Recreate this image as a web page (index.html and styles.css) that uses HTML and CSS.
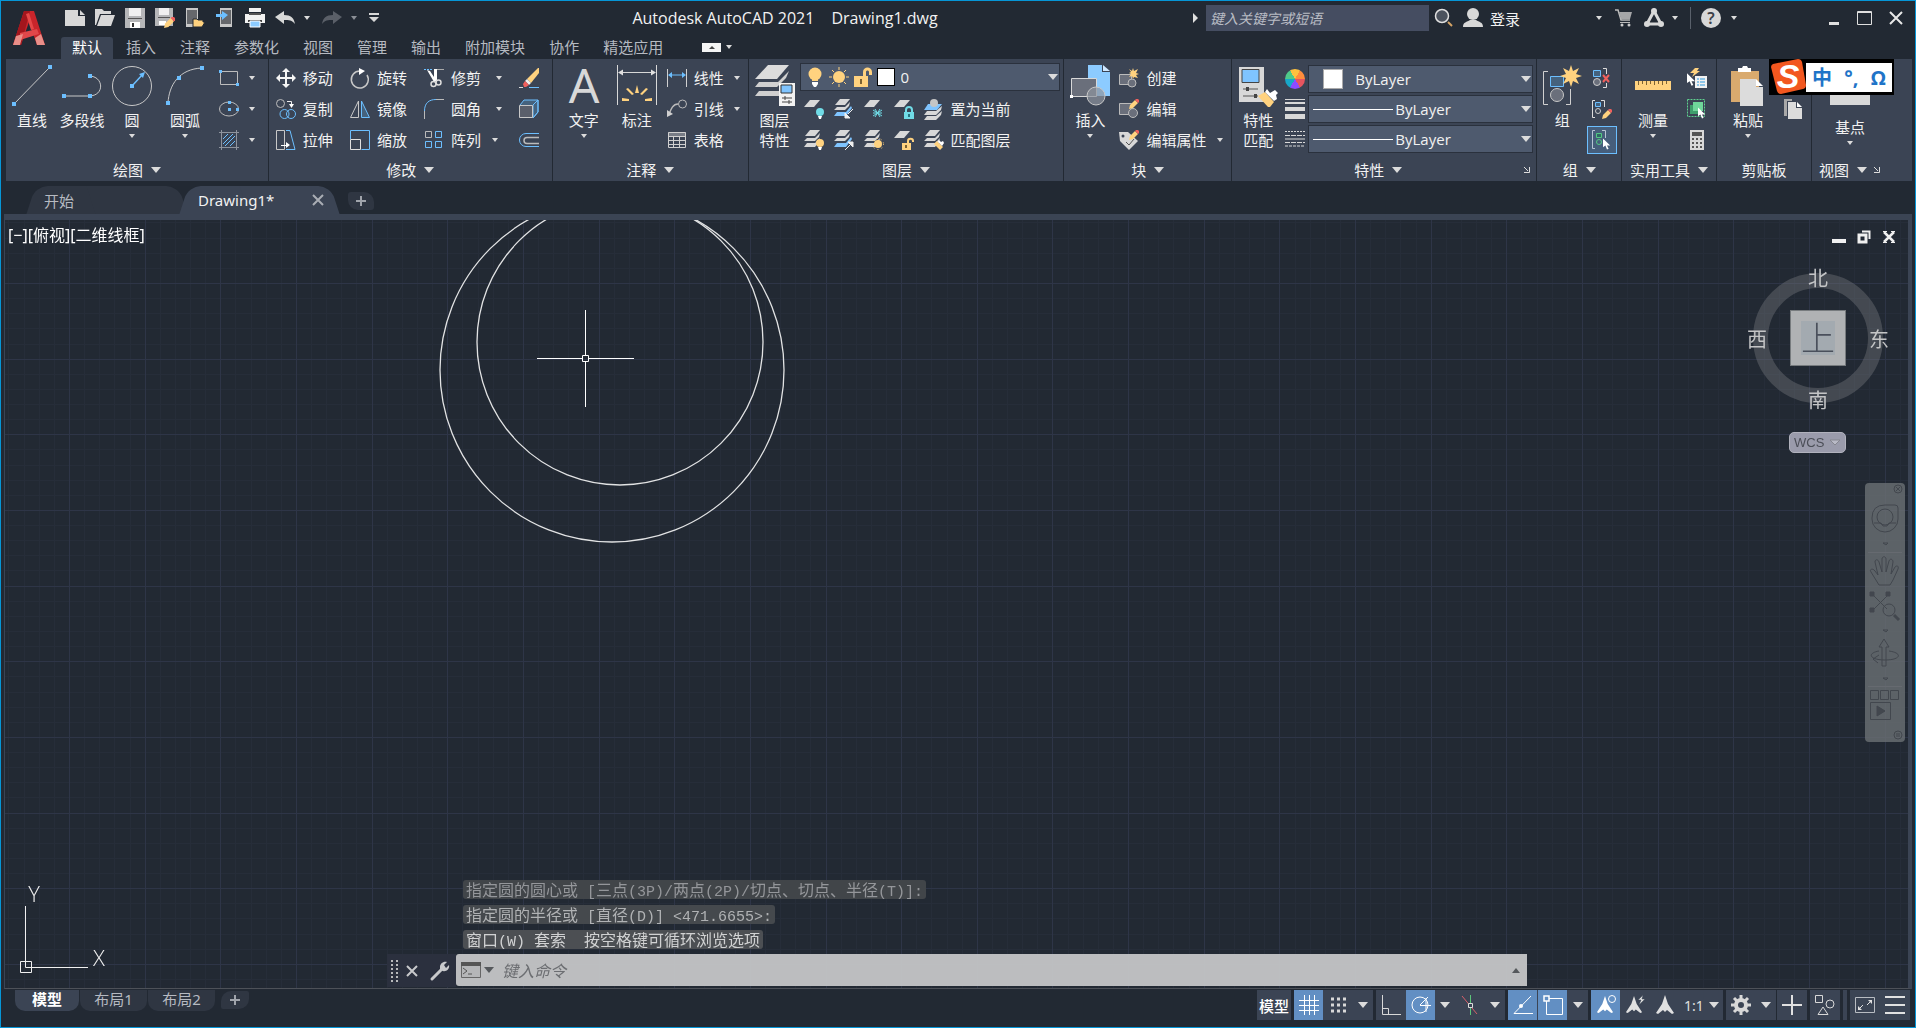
FILE: index.html
```html
<!DOCTYPE html>
<html lang="zh-CN">
<head>
  <meta charset="UTF-8" />
  <meta name="viewport" content="width=device-width, initial-scale=1.0"/>
  <title>Autodesk AutoCAD 2021 - Drawing1.dwg</title>
  <link rel="stylesheet" href="styles.css">
</head>
<body>

<!-- shared icon parts -->
<svg class="defs" aria-hidden="true">
  <symbol id="sheet" viewBox="0 0 20 20"><path d="M6 1h10l-6 7H0z" fill="#d8d8d8"/></symbol>
  <symbol id="stack" viewBox="0 0 20 20"><path d="M6 0h10l-5 6H1z" fill="#d8d8d8"/><path d="M3 8h8l5-5-1 4-4 4H0zM3 13h8l5-5-1 4-4 5H0z" fill="#d8d8d8"/></symbol>
  <symbol id="stack-blue" viewBox="0 0 20 20"><path d="M6 0h10l-5 6H1z" fill="#d8d8d8"/><path d="M3 8h8l5-5-1 4-4 4H0z" fill="#d8d8d8"/><path d="M3 13h9l5-6 1 2-6 8H0z" fill="#7fc4ff"/></symbol>
  <symbol id="pencil" viewBox="0 0 10 10"><path d="M0 10l1-4 5-5 3 3-5 5z" fill="#ffd27f"/><path d="M6 1l1-1h2l1 1v2L9 4z" fill="#f0605d"/></symbol>
  <symbol id="cursor" viewBox="0 0 10 14"><path d="M0 0v11l3-2 2 5 2-1-2-4h4z" fill="#fff"/></symbol>
  <symbol id="aperson" viewBox="0 0 20 20"><path d="M10 0l3 9 6 9-2 1-5-4-2 2-2-2-5 4-2-1 6-9z" fill="currentColor"/></symbol>
</svg>

<header class="app-header">
  <button class="app-menu" aria-label="应用程序菜单">
    <svg width="34" height="38" viewBox="0 0 34 38"><path d="M12 2h10l11 34h-8L17 13 9 36H1z" fill="#c9252b"/><path d="M12 2h6L9 36H1z" fill="#a3161d"/><path d="M8 24l17-4 2 5-19 6z" fill="#e0474a"/><path d="M1 36l3-9 7-2-3 11zM25 36l-2-7 6-4 4 11z" fill="#e98e88"/><path d="M14 5l3-1 5 16-3 1z" fill="#e54848"/></svg>
  </button>
  <div class="title-bar">
    <div class="quick-access">
      <button aria-label="新建"><svg class="i20" viewBox="0 0 20 20"><path d="M0 2h13v6h7v10H0z" fill="#d8d8d8"/><path d="M15 2l5 5h-5z" fill="#d8d8d8"/></svg></button>
      <button aria-label="打开"><svg class="i20" viewBox="0 0 20 20"><path d="M0 1h7l2 2h7v3H5L1 17H0z" fill="#d8d8d8"/><path d="M6 7h14l-4 11H2z" fill="#d8d8d8"/></svg></button>
      <button aria-label="保存"><svg class="i20" viewBox="0 0 20 20"><path d="M0 0h20v20H0z" fill="#b5b6b8"/><path d="M4 0h12v8H4z" fill="#f0f0f0"/><path d="M3 10h14v1H3z" fill="#555"/><path d="M5 14h10v6H5z" fill="#fff"/><path d="M7 15h2v4H7z" fill="#333"/></svg></button>
      <button aria-label="另存为"><svg class="i20" viewBox="0 0 20 20"><path d="M0 0h18v18H0z" fill="#b5b6b8"/><path d="M4 0h10v7H4z" fill="#f0f0f0"/><path d="M3 9h12v1H3z" fill="#555"/><path d="M4 13h7v4H4z" fill="#fff"/><use href="#pencil" x="9" y="9" width="11" height="11"/></svg></button>
      <button aria-label="从移动端打开"><svg class="i20" viewBox="0 0 20 20"><path d="M1 0h12v19H1z" fill="#c8c8c8"/><path d="M2 2h10v14H2z" fill="#66686c"/><path d="M8 11h4l1 1h5v2h2l-3 5H8z" fill="#ffd27f" stroke="#222933"/></svg></button>
      <button aria-label="保存到移动端"><svg class="i20" viewBox="0 0 20 20"><path d="M5 0h12v19H5z" fill="#c8c8c8"/><path d="M6 2h10v14H6z" fill="#66686c"/><path d="M1 6h6V3l6 4-6 5V9H1z" fill="#6cbfff"/></svg></button>
      <button aria-label="打印"><svg class="i20" viewBox="0 0 20 20"><path d="M4 0h12v4H4zM0 6h20v9H0z" fill="#f2f2f2"/><path d="M4 5h12v2H4z" fill="#555"/><path d="M3 12h14v2H3z" fill="#444"/><path d="M5 13h10v6H5z" fill="#8ccbff" stroke="#fff"/></svg></button>
      <button aria-label="放弃"><svg class="i20" viewBox="0 0 20 20"><path d="M0 9l9-6v4c7 0 10 3 11 9-3-4-6-4-11-4v4z" fill="#d8d8d8"/></svg></button>
      <button class="drop" aria-label="放弃列表"><i class="caret"></i></button>
      <button aria-label="重做"><svg class="i20" viewBox="0 0 20 20"><path d="M20 9l-9-6v4C4 7 1 10 0 16c3-4 6-4 11-4v4z" fill="#5a5f68"/></svg></button>
      <button class="drop" aria-label="重做列表"><i class="caret dim"></i></button>
      <button aria-label="自定义快速访问工具栏"><svg width="10" height="12" viewBox="0 0 10 12"><path d="M0 1h10v2H0zM0 5h10l-5 5z" fill="#d8d8d8"/></svg></button>
    </div>
    <h1 class="window-title"><span>Autodesk AutoCAD 2021</span><span>Drawing1.dwg</span></h1>
    <div class="info-center">
      <button aria-label="展开搜索"><svg width="8" height="12" viewBox="0 0 8 12"><path d="M2 1l5 5-5 5z" fill="#e0e0e0"/></svg></button>
      <input class="search-box" type="text" aria-label="搜索" placeholder="键入关键字或短语">
      <button aria-label="搜索"><svg class="i20" viewBox="0 0 20 20"><path d="M14 14l4 4" stroke="#d6a466" stroke-width="2"/><circle cx="8" cy="8" r="6.500" fill="#4c535e" stroke="#e0e0e0" stroke-width="1.500"/></svg></button>
      <button class="login"><svg class="i20" viewBox="0 0 20 20"><circle cx="10" cy="6" r="6" fill="#d8d8d8"/><path d="M0 19c0-5 4-5 7-7h6c3 2 7 2 7 7z" fill="#d8d8d8"/></svg><span>登录</span><i class="caret"></i></button>
      <button aria-label="应用商店"><svg class="i20" viewBox="0 0 20 20"><path d="M1 2h3l3 10h9" fill="none" stroke="#bbb" stroke-width="1.500"/><path d="M5 4h13l-2 7H7z" fill="#a5a6a8"/><path d="M6 14h10v1H6z" fill="#bbb"/><circle cx="8" cy="17" r="1.500" fill="#ccc"/><circle cx="15" cy="17" r="1.500" fill="#ccc"/></svg></button>
      <button class="with-caret" aria-label="保持连接"><svg class="i20" viewBox="0 0 20 20"><path d="M10 3l7 13H3z" fill="none" stroke="#d8d8d8" stroke-width="3"/><circle cx="10" cy="3" r="3" fill="#d8d8d8"/><circle cx="3" cy="16" r="3" fill="#d8d8d8"/><circle cx="17" cy="16" r="3" fill="#d8d8d8"/></svg><i class="caret"></i></button>
      <span class="divider"></span>
      <button class="with-caret help" aria-label="帮助"><span class="help-mark">?</span><i class="caret"></i></button>
    </div>
    <div class="window-buttons">
      <button aria-label="最小化"><svg width="16" height="16" viewBox="0 0 16 16"><path d="M3 12h10v3H3z" fill="#e0e0e0"/></svg></button>
      <button aria-label="最大化"><svg width="16" height="16" viewBox="0 0 16 16"><path d="M.5 1.500h14v13H.5zM0 2.500h15" fill="none" stroke="#e0e0e0"/></svg></button>
      <button aria-label="关闭"><svg width="16" height="16" viewBox="0 0 16 16"><path d="M2 2l12 12M14 2L2 14" stroke="#e8e8e8" stroke-width="2"/></svg></button>
    </div>
  </div>
  <nav class="ribbon-tabs">
    <button class="active">默认</button>
    <button>插入</button>
    <button>注释</button>
    <button>参数化</button>
    <button>视图</button>
    <button>管理</button>
    <button>输出</button>
    <button>附加模块</button>
    <button>协作</button>
    <button>精选应用</button>
    <button class="ribbon-toggle" aria-label="最小化功能区"><svg width="19" height="9" viewBox="0 0 19 9"><path d="M0 0h19v9H0z" fill="#f5f5f5"/><path d="M7 6h6L10 3z" fill="#444"/></svg><i class="caret"></i></button>
  </nav>
</header>

<section class="ribbon">
  <!-- 绘图 -->
  <div class="panel panel-draw">
    <div class="panel-body">
      <button class="big"><svg class="i40" viewBox="0 0 40 40"><path d="M2 39L38 2" stroke="#c8c8c8"/><path d="M0 37h4v4H0zM36 0h4v4h-4z" fill="#6cbfff"/></svg><span>直线</span></button>
      <button class="big"><svg class="i40" viewBox="0 0 40 40"><path d="M2 31h25c16 0 15-20 0-20" fill="none" stroke="#c8c8c8"/><path d="M0 29h4v4H0zM26 29h4v4h-4zM26 9h4v4h-4z" fill="#6cbfff"/></svg><span>多段线</span></button>
      <button class="big"><svg class="i40" viewBox="0 0 40 40"><circle cx="20" cy="21" r="19.500" fill="none" stroke="#c8c8c8"/><path d="M20 21l11-12" stroke="#6cbfff" stroke-width="1.500"/><path d="M18 19h4v4h-4zM33 7l-6 2 4 4z" fill="#6cbfff"/></svg><span>圆</span><i class="caret"></i></button>
      <button class="big wide"><svg class="i40" viewBox="0 0 40 40"><path d="M3 38C4 20 14 4 37 3" fill="none" stroke="#c8c8c8"/><path d="M1 36h4v4H1zM12 11h4v4h-4zM35 1h4v4h-4z" fill="#6cbfff"/></svg><span>圆弧</span><i class="caret"></i></button>
      <div class="rows">
        <button class="small" aria-label="矩形"><svg class="i20" viewBox="0 0 20 20"><path d="M1.500 3.500h17v13h-17z" fill="none" stroke="#bdbdbd"/><path d="M0 2h3v3H0zM17 15h3v3h-3z" fill="#6cbfff"/></svg><i class="caret"></i></button>
        <button class="small" aria-label="椭圆"><svg class="i20" viewBox="0 0 20 20"><ellipse cx="10" cy="10" rx="9.500" ry="7" fill="none" stroke="#bdbdbd"/><path d="M9 9h3v3H9zM9 2h3v3H9zM17 9h3v3h-3z" fill="#6cbfff"/></svg><i class="caret"></i></button>
        <button class="small" aria-label="图案填充"><svg class="i20" viewBox="0 0 20 20"><path d="M0 2.500h20M0 17.500h20M2.500 0v20M17.500 0v20" stroke="#8e949e"/><path d="M4 9l5-5M4 14L14 4M6 16L16 6M11 16l5-5" stroke="#6cbfff"/></svg><i class="caret"></i></button>
      </div>
    </div>
    <button class="panel-title">绘图<i class="caret large"></i></button>
  </div>

  <!-- 修改 -->
  <div class="panel panel-modify">
    <div class="panel-body">
      <div class="rows">
        <button class="small"><svg class="i20" viewBox="0 0 20 20"><path d="M10 0l4 4h-3v5h5V6l4 4-4 4v-3h-5v5h3l-4 4-4-4h3v-5H4v3l-4-4 4-4v3h5V4H6z" fill="#f5f5f5"/></svg>移动</button>
        <button class="small"><svg class="i20" viewBox="0 0 20 20"><g fill="none"><circle cx="4.500" cy="4.500" r="4" stroke="#bdbdbd"/><path d="M11 2.500h4.500V6" stroke="#eee"/><circle cx="8.500" cy="15" r="4.500" stroke="#6cbfff"/><circle cx="15" cy="15" r="4.500" stroke="#6cbfff"/></g><path d="M13 5h5l-2.500 4z" fill="#fff"/></svg>复制</button>
        <button class="small"><svg class="i20" viewBox="0 0 20 20"><path d="M.5.500h8v19h-8z" fill="none" stroke="#c8c8c8"/><path d="M10 .5h4l5 19h-9" fill="none" stroke="#6cbfff"/><path d="M5 15h5v-3l4 3-4 3v-2H5z" fill="#fff"/></svg>拉伸</button>
      </div>
      <div class="rows">
        <button class="small"><svg class="i20" viewBox="0 0 20 20"><path d="M10 3a8.500 8.500 0 1 0 7 4" fill="none" stroke="#c8c8c8" stroke-width="1.500"/><path d="M9 0l6 3-6 4z" fill="#fff"/></svg>旋转</button>
        <button class="small"><svg class="i20" viewBox="0 0 20 20"><path d="M8.500 2v16.500H.5z" fill="none" stroke="#c8c8c8"/><path d="M11.500 2v16.500h8z" fill="#45627d" stroke="#6cbfff"/></svg>镜像</button>
        <button class="small"><svg class="i20" viewBox="0 0 20 20"><path d="M.5.500h19v19h-8M.5 9V.5" fill="none" stroke="#6cbfff"/><path d="M.5 9.500h10v10H.5z" fill="none" stroke="#e0e0e0"/></svg>缩放</button>
      </div>
      <div class="rows trim">
        <button class="small"><svg class="i20" viewBox="0 0 20 20"><path d="M0 1.500h8" stroke="#6cbfff" stroke-dasharray="2 1"/><path d="M13 1.500h7" stroke="#aaa"/><path d="M3 2l3 1 6 9-2 2zM10 1h3v12h-3z" fill="#fff"/><g fill="none" stroke="#ddd" stroke-width="1.500"><circle cx="9.500" cy="16" r="2.500"/><circle cx="14.500" cy="14.500" r="2.500"/></g></svg>修剪<i class="caret"></i></button>
        <button class="small"><svg class="i20" viewBox="0 0 20 20"><path d="M.5 20v-8" stroke="#bbb"/><path d="M.5 12C.5 4 5 .5 12 .5" fill="none" stroke="#6cbfff"/><path d="M12 .5h8" stroke="#bbb"/></svg>圆角<i class="caret"></i></button>
        <button class="small array"><svg class="i20" viewBox="0 0 20 20"><path d="M1.500 1.500h6v6h-6z" fill="none" stroke="#bbb"/><path d="M11.500 1.500h6v6h-6zM1.500 11.500h6v6h-6zM11.500 11.500h6v6h-6z" fill="none" stroke="#6cbfff"/></svg>阵列<i class="caret"></i></button>
      </div>
      <div class="rows">
        <button class="small" aria-label="删除"><svg class="i20" viewBox="0 0 20 20"><path d="M0 19.500h4" stroke="#ddd"/><path d="M10 19.500h10" stroke="#6cbfff"/><path d="M8 11L19 0h1v5L12 15z" fill="#ffd27f"/><path d="M6 13l2-2 4 4-2 2z" fill="#eee"/><path d="M4 16l2-3 4 4-3 2H5z" fill="#f0605d"/></svg></button>
        <button class="small" aria-label="分解"><svg class="i20" viewBox="0 0 20 20"><path d="M1 6l4-5h14v12l-5 6M14 6l5-5v12l-5 6z" fill="#45627d" stroke="#6cbfff"/><path d="M.5 6.500h13v12H.5z" fill="#5a5f6b" stroke="#c8c8c8"/></svg></button>
        <button class="small" aria-label="偏移"><svg class="i20" viewBox="0 0 20 20"><path d="M20 3.500H7a6.500 6.500 0 0 0 0 13h13" fill="none" stroke="#6cbfff"/><path d="M20 7.500H8a3 3 0 0 0 0 6h12" fill="none" stroke="#bbb" stroke-width="1.500"/></svg></button>
      </div>
    </div>
    <button class="panel-title">修改<i class="caret large"></i></button>
  </div>

  <!-- 注释 -->
  <div class="panel panel-annotate">
    <div class="panel-body">
      <button class="big"><svg class="i40" viewBox="0 0 40 40"><text class="text-icon" x="20" y="38" text-anchor="middle">A</text></svg><span>文字</span><i class="caret"></i></button>
      <button class="big wide"><svg class="i40" viewBox="0 0 40 40"><path d="M.5 0v40M39.500 0v40M3 7.500h34" stroke="#d8d8d8"/><path d="M1 7.500l5-3v6zM39 7.500l-5-3v6z" fill="#e0e0e0"/><path d="M18 28l2-8 2 8zM15 30l-6-6 2-1 6 6zM25 30l6-6-2-1-6 6zM12 34l-7-1v3h7zM28 34l7-1v3h-7z" fill="#ffd27f"/></svg><span>标注</span></button>
      <div class="rows">
        <button class="small"><svg class="i20" viewBox="0 0 20 20"><path d="M.5 1v18M19.500 1v18" stroke="#d0d0d0"/><path d="M3 7h14" stroke="#6cbfff"/><path d="M1 7l4-3v6zM19 7l-4-3v6z" fill="#6cbfff"/></svg>线性<i class="caret"></i></button>
        <button class="small"><svg class="i20" viewBox="0 0 20 20"><circle cx="15.500" cy="5" r="4" fill="none" stroke="#bbb"/><path d="M2 15C4 10 6 5 11 5" fill="none" stroke="#bbb" stroke-width="1.500"/><path d="M0 18v-7l6 4z" fill="#d0d0d0"/></svg>引线<i class="caret"></i></button>
        <button class="small"><svg class="i20" viewBox="0 0 20 20"><path d="M1 2h18v4H1z" fill="#777c86"/><path d="M1.500 2.500h17v15h-17zM1 6.500h18M1 10.500h18M1 14.500h18M6.500 6v12M12.500 6v12" fill="none" stroke="#d0d0d0"/></svg>表格</button>
      </div>
    </div>
    <button class="panel-title">注释<i class="caret large"></i></button>
  </div>

  <!-- 图层 -->
  <div class="panel panel-layers">
    <div class="panel-body">
      <button class="big"><svg class="i40" viewBox="0 0 40 40"><path d="M13 0h21L22 14H0z" fill="#dcdcdc"/><path d="M4 17h19L34 6l-3 7-9 9H0zM4 26h20v5H0z" fill="#d0d0d0"/><path d="M24 18h16v23H24z" fill="#f2f2f2"/><path d="M26 20h11v8H26z" fill="#7fc4ff" stroke="#333"/><path d="M27 33h10M27 37h10M30 31v4M34 35v4" stroke="#444"/></svg><span>图层<br>特性</span></button>
      <div class="layer-tools">
        <div class="combo layer-combo">
          <svg class="i20" viewBox="0 0 20 20"><circle cx="10" cy="7" r="6.500" fill="#ffd27f"/><path d="M7 12h6v2H7z" fill="#ffd27f"/><path d="M7 15h6v2l-2 3H9l-2-3z" fill="#fff"/></svg>
          <svg class="i20" viewBox="0 0 20 20"><circle cx="10" cy="10" r="6" fill="#ffd27f"/><path d="M10 0v3M10 17v3M0 10h3M17 10h3M3 3l2 2M15 15l2 2M17 3l-2 2M3 17l2-2" stroke="#ffd27f"/></svg>
          <svg class="i20" viewBox="0 0 20 20"><path d="M1 9h14v11H1zM10 9V5c0-6 9-6 9 0v3h-3V5c0-2-3-2-3 0v4z" fill="#ffd27f"/><path d="M7 12h2v5H7z" fill="#7c6233"/></svg>
          <span class="swatch"></span>
          <select aria-label="图层"><option>0</option></select><i class="caret large"></i>
        </div>
        <div class="layer-row">
          <button aria-label="关"><svg class="i20" viewBox="0 0 20 20"><use href="#sheet" width="20" height="20"/><circle cx="16" cy="13" r="4" fill="#70dbe6"/><path d="M14 17h4l-1 3h-2z" fill="#fff"/></svg></button>
          <button aria-label="隔离"><svg class="i20" viewBox="0 0 20 20"><use href="#stack-blue" width="20" height="20"/><path d="M19 10l-5 5M11 19v-5l5 5z" stroke="#eee" fill="#eee"/></svg></button>
          <button aria-label="冻结"><svg class="i20" viewBox="0 0 20 20"><use href="#sheet" width="20" height="20"/><path d="M9 14h9M11 10l5 8M16 10l-5 8M9 11l9 6M9 17l9-6" stroke="#70dbe6"/></svg></button>
          <button aria-label="锁定"><svg class="i20" viewBox="0 0 20 20"><use href="#sheet" width="20" height="20"/><path d="M10 13h10v7H10z" fill="#70dbe6"/><path d="M12 13v-2c0-4 6-4 6 0v2" fill="none" stroke="#70dbe6" stroke-width="2"/><path d="M14 15h2v3h-2z" fill="#267480"/></svg></button>
          <button><svg class="i20" viewBox="0 0 20 20"><path d="M4 5h14l-5 6H0z" fill="#7fc4ff"/><path d="M3 12h9l6-5-1 4-5 5H0zM3 17h9l6-5-1 4-5 5H0z" fill="#d8d8d8"/><circle cx="10" cy="4" r="4" fill="#c5c5c5"/></svg>置为当前</button>
        </div>
        <div class="layer-row">
          <button aria-label="打开所有图层"><svg class="i20" viewBox="0 0 20 20"><use href="#stack" width="20" height="20"/><circle cx="16" cy="13" r="4" fill="#ffd27f"/><path d="M14 17h4l-1 3h-2z" fill="#fff"/></svg></button>
          <button aria-label="取消隔离"><svg class="i20" viewBox="0 0 20 20"><use href="#stack-blue" width="20" height="20"/><path d="M11 20l5-5M19 12v5l-5-5z" stroke="#eee" fill="#eee"/></svg></button>
          <button aria-label="解冻所有图层"><svg class="i20" viewBox="0 0 20 20"><use href="#stack" width="20" height="20"/><circle cx="14" cy="14" r="4" fill="#ffd27f"/><circle cx="14" cy="14" r="5.500" fill="none" stroke="#ffd27f" stroke-dasharray="1 3"/></svg></button>
          <button aria-label="解锁"><svg class="i20" viewBox="0 0 20 20"><use href="#sheet" width="20" height="20"/><path d="M8 13h9v7H8z" fill="#ffd27f"/><path d="M14 13v-2c0-3 5-3 5 0v1" fill="none" stroke="#ffd27f" stroke-width="2"/><path d="M11 15h2v3h-2z" fill="#7c6233"/></svg></button>
          <button><svg class="i20" viewBox="0 0 20 20"><use href="#stack" width="20" height="20"/><path d="M10 14l3-3 6 6-3 3z" fill="#ffd27f"/><path d="M14 12l1-2 2 2 2-1 1 2-2 3z" fill="#fff"/></svg>匹配图层</button>
        </div>
      </div>
    </div>
    <button class="panel-title">图层<i class="caret large"></i></button>
  </div>

  <!-- 块 -->
  <div class="panel panel-block">
    <div class="panel-body">
      <button class="big"><svg class="i40" viewBox="0 0 40 40"><path d="M18 0h14v7h8v24H18z" fill="#8ccbff"/><path d="M33 0l7 6h-7z" fill="#cfe8ff"/><path d="M1.500 13.500h25v18h-25z" fill="#6a6f7b" stroke="#d8d8d8"/><circle cx="26" cy="31" r="9" fill="#8f949e" fill-opacity=".7" stroke="#c8c8c8"/><path d="M0 30h3v3H0z" fill="#fff"/></svg><span>插入</span><i class="caret"></i></button>
      <div class="rows">
        <button class="small"><svg class="i20" viewBox="0 0 20 20"><path d="M.5 6.500h12v10H.5z" fill="#6a6f7b" stroke="#bbb"/><circle cx="13" cy="15" r="4" fill="#6a6f7b" stroke="#bbb"/><path d="M14 0l1 3 4-2-2 4 3 1-3 1 2 3-4-1-1 2-1-3-3 1 2-3-2-1 2-1-2-3 3 2z" fill="#ffd27f"/></svg>创建</button>
        <button class="small"><svg class="i20" viewBox="0 0 20 20"><path d="M.5 4.500h12v11H.5z" fill="#6a6f7b" stroke="#bbb"/><circle cx="14" cy="14" r="4.500" fill="#6a6f7b" stroke="#bbb"/><use href="#pencil" x="10" y="0" width="10" height="10"/></svg>编辑</button>
        <button class="small"><svg class="i20" viewBox="0 0 20 20"><path d="M0 2h9l10 9-9 9-9-9z" fill="#d8d8d8"/><circle cx="4" cy="6" r="1.500" fill="#3b4454"/><path d="M7 12l3 3 5-6" fill="none" stroke="#555"/><use href="#pencil" x="10" y="0" width="10" height="10"/></svg>编辑属性<i class="caret"></i></button>
      </div>
    </div>
    <button class="panel-title">块<i class="caret large"></i></button>
  </div>

  <!-- 特性 -->
  <div class="panel panel-props">
    <div class="panel-body">
      <button class="big"><svg class="i40" viewBox="0 0 40 40"><path d="M1 2h25v35H1z" fill="#d8d8d8"/><path d="M4 4.500h17v13H4z" fill="#7fc4ff" stroke="#444"/><path d="M5 24h15M5 31h15" stroke="#555"/><path d="M8 22h3v4H8zM16 29h3v4h-3z" fill="#444"/><path d="M20 31l7-4 9 10-4 5h-2z" fill="#ffd27f"/><path d="M27 27l2-3 3 4 5-3 3 3-2 2 1 4-3 2z" fill="#fff"/></svg><span>特性<br>匹配</span></button>
      <div class="prop-grid">
        <span class="color-wheel"></span>
        <div class="combo"><span class="swatch color"></span><select aria-label="对象颜色"><option>ByLayer</option></select><i class="caret large"></i></div>
        <svg class="i20" viewBox="0 0 20 20"><path d="M0 0h20v1H0zM0 3h20v2H0zM0 8h20v4H0zM0 15h20v5H0z" fill="#d8d8d8"/></svg>
        <div class="combo"><span class="line-sample"></span><select aria-label="线宽"><option>ByLayer</option></select><i class="caret large"></i></div>
        <svg class="i20" viewBox="0 0 20 20"><path d="M0 2.500h20" stroke="#d8d8d8" stroke-dasharray="2 1"/><path d="M0 6.500h20M0 13.500h20" stroke="#d8d8d8" stroke-dasharray="5 1"/><path d="M0 10h20" stroke="#d8d8d8"/><path d="M0 17h20" stroke="#d8d8d8" stroke-dasharray="3 1"/></svg>
        <div class="combo"><span class="line-sample"></span><select aria-label="线型"><option>ByLayer</option></select><i class="caret large"></i></div>
      </div>
    </div>
    <div class="title-row"><button class="panel-title">特性<i class="caret large"></i></button><button class="launcher" aria-label="特性选项板"><svg width="6" height="6" viewBox="0 0 6 6"><path d="M0 0l4 4M5.500 0v5.500H0" stroke="#ddd" fill="none"/></svg></button></div>
  </div>

  <!-- 组 -->
  <div class="panel panel-group">
    <div class="panel-body">
      <button class="big"><svg class="i40" viewBox="0 0 40 40"><path d="M6 6.500H1.500v33H6M24 39.500h4.500V24" fill="none" stroke="#d0d0d0"/><path d="M8.500 11.500h13v10h-13z" fill="#45627d" stroke="#6cbfff"/><circle cx="15" cy="30" r="6.500" fill="#6a6f7b" stroke="#c8c8c8"/><path d="M29 0l2 6 6-3-3 6 6 2-6 2 3 6-6-3-2 6-2-6-6 3 3-6-6-2 6-2-3-6 6 3z" fill="#ffd27f"/></svg><span>组</span></button>
      <div class="rows">
        <button class="small" aria-label="解除编组"><svg class="i20" viewBox="0 0 20 20"><path d="M1.500 2.500h7v6h-7z" fill="#45627d" stroke="#6cbfff"/><circle cx="5" cy="14" r="3.500" fill="#6a6f7b" stroke="#ccc"/><path d="M11 .5h3.500V6M11 19.500h3.500V15" fill="none" stroke="#ddd"/><path d="M11 7l6 7M17 7l-6 7" stroke="#f0605d" stroke-width="2"/></svg></button>
        <button class="small" aria-label="组编辑"><svg class="i20" viewBox="0 0 20 20"><path d="M3 1.500H.5v17H3M9 1.500h3.500V8" fill="none" stroke="#ddd"/><path d="M3.500 3.500h5v4h-5z" fill="#45627d" stroke="#6cbfff"/><circle cx="6" cy="12" r="2.500" fill="none" stroke="#ccc"/><use href="#pencil" x="10" y="10" width="10" height="10"/></svg></button>
        <button class="small active" aria-label="启用/禁用组选择"><svg class="i20" viewBox="0 0 20 20"><path d="M3 .5H.5v18H3M10 .5h3.500V8" fill="none" stroke="#b8c4d4"/><path d="M4.500 3.500h5v4h-5z" fill="#2f6b64" stroke="#55c985"/><circle cx="7" cy="12" r="2.500" fill="none" stroke="#55c985"/><use href="#cursor" x="11" y="8" width="8" height="12"/></svg></button>
      </div>
    </div>
    <button class="panel-title">组<i class="caret large"></i></button>
  </div>

  <!-- 实用工具 -->
  <div class="panel panel-utils">
    <div class="panel-body">
      <button class="big"><svg class="i40" viewBox="0 0 40 40"><path d="M2 16h36v9H2z" fill="#ffd27f"/><path d="M5.500 16v4M9.500 16v3M13.500 16v4M17.500 16v3M21.500 16v4M25.500 16v3M29.500 16v4M33.500 16v3" stroke="#7c6233"/></svg><span>测量</span><i class="caret"></i></button>
      <div class="rows">
        <button class="small" aria-label="快速选择"><svg class="i20" viewBox="0 0 20 20"><path d="M8 0h4l-2 3h3L5 9l2-4H3z" fill="#ffd27f"/><use href="#cursor" x="0" y="5" width="9" height="13"/><path d="M8 8h12v12H8z" fill="#f2f2f2"/><path d="M10 11h2M10 14h2M10 17h2M13 11h5M13 14h5M13 17h5" stroke="#2d9be0"/></svg></button>
        <button class="small" aria-label="全部选择"><svg class="i20" viewBox="0 0 20 20"><path d="M.5.500h17v17H.5z" fill="none" stroke="#5fd08f" stroke-dasharray="2 1"/><path d="M3 6h9v9H3z" fill="#3f9e6c"/><path d="M6 3h10v9H6z" fill="#6fd69a"/><use href="#cursor" x="11" y="8" width="8" height="12"/></svg></button>
        <button class="small" aria-label="快速计算器"><svg class="i20" viewBox="0 0 20 20"><path d="M3 0h14v20H3z" fill="#d8d8d8"/><path d="M5 2h10v4H5zM5 8h2v2H5zM9 8h2v2H9zM13 8h2v2h-2zM5 12h2v2H5zM9 12h2v2H9zM13 12h2v2h-2zM5 16h2v2H5zM9 16h2v2H9zM13 16h2v2h-2z" fill="#555"/></svg></button>
      </div>
    </div>
    <button class="panel-title">实用工具<i class="caret large"></i></button>
  </div>

  <!-- 剪贴板 -->
  <div class="panel panel-clip">
    <div class="panel-body">
      <button class="big"><svg class="i40" viewBox="0 0 40 40"><path d="M3 6h28v31H3z" fill="#d9aa6e"/><path d="M10 3h4l1-2h4l1 2h3v4H10z" fill="#fff"/><path d="M12 14h16v8h7v19H12z" fill="#dcdcdc"/><path d="M28 14l7 7h-7z" fill="#fff"/></svg><span>粘贴</span><i class="caret"></i></button>
      <div class="rows">
        <button class="small" aria-label="剪切"></button>
        <button class="small" aria-label="复制裁剪"><svg class="i20" viewBox="0 0 20 20"><path d="M0 0h8v2H3v15H0z" fill="#a8a8a8"/><path d="M4 3h8v6h6v11H4z" fill="#dcdcdc"/><path d="M13 3l5 5h-5z" fill="#fff"/></svg></button>
      </div>
    </div>
    <button class="panel-title">剪贴板</button>
  </div>

  <!-- 视图 -->
  <div class="panel panel-view">
    <div class="panel-body">
      <button class="big"><svg class="i40" viewBox="0 0 40 40"><path d="M0 0h40v40H0z" fill="#d8d8d8"/></svg><span>基点</span><i class="caret"></i></button>
    </div>
    <div class="title-row"><button class="panel-title">视图<i class="caret large"></i></button><button class="launcher" aria-label="视图选项"><svg width="6" height="6" viewBox="0 0 6 6"><path d="M0 0l4 4M5.500 0v5.500H0" stroke="#ddd" fill="none"/></svg></button></div>
  </div>

  <!-- input method bar floats over the ribbon -->
  <div class="ime-bar">
    <svg class="ime-logo" viewBox="0 0 36 36"><path d="M1 8Q1 6 3 5L28 0q3 0 4 3l4 23q0 3-3 4L11 35q-3 0-4-3z" fill="#f2571f"/><text x="18" y="29" text-anchor="middle">S</text></svg>
    <div class="ime-keys"><span>中</span><span>°,</span><span>Ω</span></div>
  </div>
</section>

<nav class="file-tabs">
  <button class="file-tab">开始</button>
  <button class="file-tab active">Drawing1*<svg width="12" height="12" viewBox="0 0 12 12"><path d="M1 1l10 10M11 1L1 11" stroke="#a9adb4" stroke-width="2"/></svg></button>
  <button class="add-tab" aria-label="新图形"><svg width="10" height="10" viewBox="0 0 10 10"><path d="M5 0v10M0 5h10" stroke="#a0a4ab" stroke-width="2"/></svg></button>
</nav>

<main class="viewport">
  <canvas class="grid" id="grid"></canvas>
  <svg class="drawing" aria-hidden="true">
    <g fill="none" stroke="#e2e3e4">
      <circle cx="607" cy="150" r="172" stroke-width="1.300"/>
      <circle cx="615" cy="122" r="143" stroke-width="1.300"/>
      <path d="M532 138.500h45M584 138.500h45M580.500 90v45M580.500 142v45M577.500 135.500h6v6h-6z" stroke="#fff"/>
    </g>
  </svg>
  <div class="view-label"><button>[−]</button><button>[俯视]</button><button>[二维线框]</button></div>
  <div class="view-buttons">
    <button aria-label="最小化"><svg width="14" height="14" viewBox="0 0 14 14"><path d="M0 9h14v4H0z" fill="#f0f0f0"/></svg></button>
    <button aria-label="还原"><svg width="14" height="14" viewBox="0 0 14 14"><path d="M5 1.500h7.500V9" fill="none" stroke="#f0f0f0" stroke-width="2"/><path d="M2 5h7v7H2z" fill="none" stroke="#f0f0f0" stroke-width="3"/></svg></button>
    <button aria-label="关闭"><svg width="14" height="14" viewBox="0 0 14 14"><path d="M2 2l10 10M12 2L2 12" stroke="#f0f0f0" stroke-width="2.500"/><path d="M1 1.500h4M9 1.500h4M1 12.500h4M9 12.500h4" stroke="#f0f0f0"/></svg></button>
  </div>

  <div class="view-cube">
    <span class="north">北</span>
    <span class="west">西</span>
    <button class="cube-face"><span>上</span></button>
    <span class="east">东</span>
    <span class="south">南</span>
  </div>
  <button class="wcs">WCS<svg width="12" height="8" viewBox="0 0 12 8"><path d="M1 1h10L6 6z" fill="#b9bac6" stroke="#85868f"/></svg></button>

  <div class="nav-bar">
    <svg width="40" height="259" viewBox="0 0 40 259" fill="none" stroke="#42474e">
      <circle cx="33" cy="6" r="4"/><path d="M31 4l4 4M35 4l-4 4"/>
      <path d="M20 22h10q3 0 3 3v11a13 13 0 0 1-26 0v-1q0-13 13-13z"/><circle cx="20" cy="34" r="8"/><path d="M9 40h7l2 3h4l2-3h7"/>
      <path d="M18 60h5l-2 2z"/>
      <path d="M14 102l-8-13c-2-3 2-4 4-1l3 4-3-13c0-3 3-3 4 0l3 10V76c0-3 4-3 4 0v13l3-11c1-3 4-2 4 1l-2 12 4-7c2-2 4-1 3 2l-5 11-3 5z"/>
      <path d="M7 111l15 15M24 111L8 127"/><path d="M5 109h4v4H5zM21 109h4v4h-4zM5 125h4v4H5z" fill="#42474e"/>
      <circle cx="24" cy="127" r="6"/><path d="M29 132l5 5" stroke-width="3"/><path d="M18 147h5l-2 2z"/>
      <path d="M17 183v-19h-3l5-8 5 8h-3v19z"/><path d="M14 168c-12 2-10 9 6 9s18-7 4-9M14 172l-6 4 5 4"/><path d="M18 195h5l-2 2z"/>
      <path d="M5.500 207.500h8v9h-8zM15.500 207.500h8v9h-8zM25.500 207.500h8v9h-8zM5.500 219.500h20v17h-20z"/><path d="M12 223l8 5-8 5z" fill="#42474e"/>
      <circle cx="33" cy="252" r="4"/><path d="M31 251h4M31 253h4"/>
      <path d="M3 69.500h34M3 203.500h34" stroke="#666a70"/>
    </svg>
  </div>

  <svg class="ucs-icon" width="110" height="92" viewBox="0 0 110 92" aria-hidden="true">
    <path d="M10.500 20v61.500H73M5.500 75.500h11v11h-11z" fill="none" stroke="#f0f0f0"/>
    <text x="19" y="16" text-anchor="middle">Y</text><text x="84" y="80" text-anchor="middle">X</text>
  </svg>

  <div class="command">
    <div class="history">
      <p class="oldest">指定圆的圆心或<code> [</code>三点<code>(3P)/</code>两点<code>(2P)/</code>切点、切点、半径<code>(T)]:</code></p>
      <p class="older">指定圆的半径或<code> [</code>直径<code>(D)] &lt;471.6655&gt;:</code></p>
      <p>窗口<code>(W) </code>套索<code>  </code>按空格键可循环浏览选项</p>
    </div>
    <div class="command-line">
      <div class="command-tools">
        <svg width="8" height="22" viewBox="0 0 8 22"><path d="M1 0v22M6 0v22" stroke="#b8b9bb" stroke-width="2" stroke-dasharray="2"/></svg>
        <button aria-label="关闭命令行"><svg width="12" height="12" viewBox="0 0 12 12"><path d="M1 1l10 10M11 1L1 11" stroke="#c8c9cb" stroke-width="2"/></svg></button>
        <button class="wrench" aria-label="自定义"><svg class="i20" viewBox="0 0 20 20"><path d="M2 18L12 8" stroke="#c8c9cb" stroke-width="3" stroke-linecap="round"/><path d="M10 6c0-3 3-6 7-5l-3 3 2 3 3-3c1 4-3 7-6 6l-3-1z" fill="#c8c9cb"/></svg></button>
      </div>
      <label class="command-input">
        <svg class="i20" viewBox="0 0 20 20"><path d="M.5 2.500h19v15H.5z" fill="#b5b6b8" stroke="#666"/><path d="M0 2h20v4H0z" fill="#555"/><path d="M2 8l4 3-4 3M7 14h4" fill="none" stroke="#555"/></svg>
        <i class="caret large dark"></i>
        <input type="text" aria-label="命令" placeholder="键入命令">
        <i class="caret up"></i>
      </label>
    </div>
  </div>
</main>

<footer class="status-bar">
  <nav class="layout-tabs">
    <button class="active">模型</button>
    <button>布局1</button>
    <button>布局2</button>
    <button class="add" aria-label="新建布局"><svg width="10" height="10" viewBox="0 0 10 10"><path d="M5 0v10M0 5h10" stroke="#a0a4ab" stroke-width="2"/></svg></button>
  </nav>
  <div class="status-tools">
    <div class="group"><button class="model">模型</button></div>
    <div class="group">
      <button class="on" aria-label="栅格"><svg class="i20" viewBox="0 0 20 20"><path d="M5.500 0v20M10.500 0v20M15.500 0v20M0 5.500h20M0 10.500h20M0 15.500h20" stroke="#fff"/></svg></button>
      <button aria-label="捕捉"><svg class="i20" viewBox="0 0 20 20"><path d="M3 4h16M3 10h16M3 16h16" stroke="#d8d8d8" stroke-width="3" stroke-dasharray="3"/></svg></button>
      <button class="arrow" aria-label="捕捉设置"><i class="caret large"></i></button>
    </div>
    <div class="group">
      <button aria-label="正交"><svg class="i20" viewBox="0 0 20 20"><path d="M1.500 0v19.500H20M1.500 13.500h6v6" fill="none" stroke="#d8d8d8"/></svg></button>
      <button class="on" aria-label="极轴追踪"><svg class="i20" viewBox="0 0 20 20"><circle cx="9" cy="10" r="8" fill="none" stroke="#fff"/><path d="M9 10.500h11M9 10l8-8M15 3v14" stroke="#fff"/></svg></button>
      <button class="arrow" aria-label="极轴设置"><i class="caret large"></i></button>
      <button aria-label="等轴测草图"><svg class="i20" viewBox="0 0 20 20"><path d="M2 1l15 18" stroke="#d8606a"/><path d="M10.500 0v20" stroke="#5cc47a"/><path d="M8.500 8.500h4v4h-4z" fill="#3b4454" stroke="#ddd"/></svg></button>
      <button class="arrow" aria-label="等轴测设置"><i class="caret large"></i></button>
    </div>
    <div class="group osnap">
      <button class="on" aria-label="对象捕捉追踪"><svg class="i20" viewBox="0 0 20 20"><path d="M18 1L1 18.500h19" fill="none" stroke="#fff"/><circle cx="8" cy="11" r="2" fill="#fff"/></svg></button>
      <button class="on" aria-label="对象捕捉"><svg class="i20" viewBox="0 0 20 20"><path d="M6 3.500h13.500v16H3.500V6" fill="none" stroke="#fff"/><path d="M1 1h5v5H1z" fill="none" stroke="#fff" stroke-width="1.500"/></svg></button>
      <button class="arrow" aria-label="对象捕捉设置"><i class="caret large"></i></button>
    </div>
    <div class="group">
      <button class="on" aria-label="注释可见性"><svg class="i20" viewBox="0 0 20 20"><use href="#aperson" width="18" height="20"/><circle cx="16" cy="4" r="3.500" fill="#628fc3" stroke="#fff"/></svg></button>
      <button aria-label="自动缩放"><svg class="i20" viewBox="0 0 20 20"><use href="#aperson" width="18" height="20"/><path d="M18 0l-5 5h3l-2 5 6-6h-3z" fill="#e0e0e0" stroke="#3b4454" stroke-width=".5"/></svg></button>
      <button aria-label="注释比例"><svg class="i20" viewBox="0 0 20 20"><use href="#aperson" width="20" height="20"/></svg></button>
      <button class="scale">1:1<i class="caret large"></i></button>
    </div>
    <div class="group">
      <button aria-label="切换工作空间"><svg class="i20" viewBox="0 0 20 20"><circle cx="10" cy="10" r="5" fill="none" stroke="#d8d8d8" stroke-width="4"/><path d="M10 0v4M10 16v4M0 10h4M16 10h4M3 3l3 3M14 14l3 3M17 3l-3 3M3 17l3-3" stroke="#d8d8d8" stroke-width="3"/></svg></button>
      <button class="arrow" aria-label="工作空间列表"><i class="caret large"></i></button>
      <button class="split" aria-label="注释监视器"><svg class="i20" viewBox="0 0 20 20"><path d="M10 0v20M0 10h20" stroke="#e0e0e0" stroke-width="2"/></svg></button>
    </div>
    <div class="group"><button aria-label="隔离对象"><svg class="i20" viewBox="0 0 20 20"><g fill="none" stroke="#d8d8d8"><path d="M.5.500h7v7h-7zM8 12l5 7.500H3z"/><circle cx="15" cy="9" r="4"/></g></svg></button></div>
    <div class="group sliver"></div>
    <div class="group">
      <button aria-label="全屏显示"><svg class="i20" viewBox="0 0 20 20"><path d="M.5 2.500h19v15H.5z" fill="none" stroke="#b8bcc2"/><path d="M13 5h4v4zM3 11v4h4z" fill="#e0e0e0"/><path d="M15 7l-3 3M5 13l3-3" stroke="#e0e0e0"/></svg></button>
      <button aria-label="自定义"><svg class="i20" viewBox="0 0 20 20"><path d="M0 2h20M0 10h20M0 18h20" stroke="#e0e0e0" stroke-width="2"/></svg></button>
    </div>
  </div>
</footer>

<script src="script.js"></script>
</body>
</html>
```

FILE: styles.css
```css
* {
  box-sizing: border-box;
}

body {
  font-family: "Noto Sans", "Noto Sans CJK SC", sans-serif;
  font-size: 15px;
  margin: 0;
  height: 100vh;
  display: flex;
  flex-direction: column;
  background: #222933;
  border: 1px solid #0696d7;
  color: #f2f2f2;
  overflow: hidden;
}

button, input, select {
  font: inherit;
  color: inherit;
  background: none;
  border: none;
  padding: 0;
  margin: 0;
}

button {
  white-space: nowrap;
}

svg {
  display: block;
  flex: none;
}

.defs {
  position: absolute;
  width: 0;
  height: 0;
}

.i20 { width: 20px; height: 20px; overflow: visible; }
.i40 { width: 40px; height: 40px; overflow: visible; }

/* triangles used by every drop-down */
.caret {
  flex: none;
  width: 0;
  height: 0;
  border: 3px solid transparent;
  border-top: 4px solid #dcdcdc;
  border-bottom: 0;
}

.caret.large { border-width: 6px 5px 0; }
.caret.dim { border-top-color: #8a8e95; }
.caret.dark { border-top-color: #55585c; }
.caret.up { border: 4px solid transparent; border-bottom: 5px solid #55585c; border-top: 0; }

/* header */
.app-header {
  display: grid;
  grid-template-columns: 60px 1fr;
  grid-template-rows: 36px 22px;
}

.app-menu {
  grid-row: 1 / 3;
  display: flex;
  padding: 8px 0 0 11px;
}

.title-bar {
  display: flex;
  align-items: center;
  padding: 0 4px 2px;
  height: 36px;
}

.quick-access {
  display: flex;
  align-items: center;
  gap: 10px;
}

.quick-access button {
  display: flex;
}

.quick-access .drop {
  margin: 0 2px 0 -1px;
}

.window-title {
  flex: 1;
  display: flex;
  justify-content: center;
  gap: 17px;
  margin: 0;
  font-size: 16px;
  font-weight: normal;
  line-height: 22px;
  font-family: "Open Sans", sans-serif;
}

.info-center {
  display: flex;
  align-items: center;
}

.search-box {
  width: 223px;
  height: 26px;
  margin: 0 5px 0 7px;
  padding: 0 4px;
  background: #454d61;
  font: italic 14px "Noto Sans CJK SC", sans-serif;
}

.search-box::placeholder {
  color: #b9bcc4;
}

.login {
  display: flex;
  align-items: center;
  gap: 7px;
  width: 139px;
  margin: 0 12px 0 9px;
}

.login .caret {
  margin-left: auto;
}

.with-caret {
  display: flex;
  align-items: center;
  gap: 8px;
  margin-left: 10px;
}

.divider {
  width: 1px;
  height: 22px;
  margin-left: 12px;
  background: #59606b;
}

.with-caret.help {
  gap: 10px;
}

.help-mark {
  width: 20px;
  height: 20px;
  border-radius: 50%;
  background: #d8d8d8;
  color: #3c4048;
  font-size: 16px;
  font-weight: 600;
  line-height: 20px;
}

.window-buttons {
  display: flex;
  margin-left: 81px;
}

.window-buttons button {
  width: 31px;
  display: flex;
  justify-content: center;
}

.ribbon-tabs {
  display: flex;
  color: #b6bac1;
}

.ribbon-tabs button {
  padding: 0 12px 2px;
  line-height: 20px;
}

.ribbon-tabs .active {
  padding: 0 11px 2px;
  margin-right: 1px;
  background: #3b4454;
  color: #fff;
  border-radius: 3px 3px 0 0;
}

.ribbon-tabs .ribbon-toggle {
  display: flex;
  align-items: center;
  gap: 5px;
  padding-left: 27px;
}

/* ribbon */
.ribbon {
  position: relative;
  display: flex;
  gap: 1px;
  height: 122px;
  margin: 0 3px 0 5px;
}

.panel {
  display: flex;
  flex-direction: column;
  background: #3b4454;
}

.panel-draw { flex: 262 0 0; }
.panel-modify { flex: 283 0 0; }
.panel-annotate { flex: 195 0 0; }
.panel-layers { flex: 315 0 0; }
.panel-block { flex: 167 0 0; }
.panel-props { flex: 304 0 0; }
.panel-group { flex: 84 0 0; }
.panel-utils { flex: 94 0 0; }
.panel-clip { flex: 94 0 0; }
.panel-view { flex: 100 0 0; }

.panel-body {
  display: flex;
  height: 98px;
  padding-top: 3px;
}

.panel-title {
  display: flex;
  justify-content: center;
  align-items: center;
  gap: 8px;
  height: 24px;
  padding-top: 2px;
  line-height: 22px;
}

.title-row {
  display: flex;
}

.title-row .panel-title {
  flex: 1;
}

.launcher {
  width: 10px;
  margin: 2px 2px 0 0;
}

.big {
  display: flex;
  flex-direction: column;
  align-items: center;
  width: 50px;
  padding-top: 3px;
  line-height: 20px;
}

.big span {
  margin: 5px 0 4px;
}

.big.wide {
  width: 56px;
}

.rows {
  display: grid;
  grid-template-rows: repeat(3, 31px);
  align-content: start;
}

.small {
  display: flex;
  align-items: center;
  gap: 7px;
}

.panel-draw .panel-body { padding-left: 1px; }
.panel-draw .rows { padding-left: 6px; }
.panel-draw .small { gap: 10px; }

.panel-modify .panel-body {
  padding-left: 7px;
  gap: 17px;
}

.trim .caret { margin-left: 8px; }
.trim .array .caret { margin-left: 4px; }

.panel-annotate .panel-body { padding-left: 6px; }
.panel-annotate .rows { padding-left: 2px; }
.panel-annotate .small .caret { margin-left: 3px; }

.panel-layers .panel-body {
  padding-left: 1px;
}

.text-icon {
  font: 48px "Noto Sans", sans-serif;
  fill: #d8d8d8;
}

.combo {
  display: flex;
  align-items: center;
  height: 28px;
  padding: 0 1px 0 4px;
  background: #4e5a6e;
  border: 1px solid #2a313d;
}

.combo select {
  flex: 1;
  min-width: 0;
  appearance: none;
  font-family: "Open Sans", sans-serif;
  outline: none;
}

.layer-tools {
  flex: 1;
  padding-right: 3px;
}

.layer-combo {
  gap: 4px;
  margin: 1px 0 2px;
}

.layer-combo select {
  margin-left: 2px;
}

.swatch {
  width: 18px;
  height: 18px;
  background: #fff;
  border: 1px solid #000;
}

.swatch.color {
  width: 20px;
  height: 20px;
  margin: 0 12px 0 10px;
  border-color: #aaa;
}

.line-sample {
  width: 80px;
  height: 1px;
  margin-right: 2px;
  background: #fff;
}

.layer-row {
  display: flex;
  gap: 10px;
  height: 31px;
  padding-left: 4px;
}

.layer-row button {
  display: flex;
  align-items: center;
  gap: 7px;
}

.panel-block .panel-body { padding-left: 1px; }
.panel-block .rows { padding-left: 4px; }
.panel-block .small .caret { margin-left: 4px; }

.panel-props .panel-body {
  padding-left: 1px;
}

.prop-grid {
  flex: 1;
  display: grid;
  grid-template-columns: 20px 1fr;
  grid-template-rows: repeat(3, 28px);
  gap: 2px 3px;
  align-items: center;
  padding: 3px 3px 0 2px;
}

.color-wheel {
  width: 20px;
  height: 20px;
  border-radius: 50%;
  background: conic-gradient(from -30deg, #ffc23e 60deg, #ff8d3c 60deg 120deg, #e6555f 120deg 180deg, #8d4bff 180deg 240deg, #17a8c8 240deg 300deg, #4fc98a 300deg);
}

.panel-group .rows .small {
  justify-content: center;
  width: 30px;
  height: 28px;
  align-self: center;
}

.panel-group .rows .active {
  background: #465e7b;
  border: 1px solid #6cbfff;
}

.panel-utils .panel-body { padding-left: 6px; }
.panel-utils .rows { padding-left: 9px; }

.panel-clip .panel-body { padding-left: 6px; }
.panel-clip .rows { padding-left: 11px; }

.panel-view .panel-body { padding-left: 13px; }
.panel-view .big span { margin-top: 12px; }
.panel-view .title-row { padding-right: 26px; }

.ime-bar {
  position: absolute;
  right: 18px;
  top: 0;
  display: flex;
  width: 125px;
  height: 36px;
  padding: 0 2px 0 1px;
  background: #000;
}

.ime-logo {
  width: 36px;
  height: 36px;
}

.ime-logo text {
  font: bold italic 34px "Liberation Sans", sans-serif;
  fill: #fff;
}

.ime-keys {
  flex: 1;
  display: flex;
  justify-content: space-around;
  align-items: center;
  height: 29px;
  margin-top: 4px;
  background: #fff;
  color: #1f74c8;
  font-size: 20px;
  font-weight: bold;
  line-height: 28px;
}

/* drawing file tabs */
.file-tabs {
  display: flex;
  align-items: flex-end;
  height: 33px;
  padding-left: 25px;
}

.file-tab {
  position: relative;
  z-index: 0;
  display: flex;
  align-items: center;
  justify-content: space-between;
  width: 153px;
  height: 28px;
  padding: 0 16px 0 18px;
  color: #b6bac1;
}

/* slanted tab sides */
.file-tab::before, .file-tab::after {
  content: "";
  position: absolute;
  z-index: -1;
  top: 0;
  bottom: 0;
  width: 60%;
  background: #2f3642;
}

.file-tab::before {
  left: 5px;
  border-radius: 12px 0 0 0;
  transform: skewX(-18deg);
}

.file-tab::after {
  right: -4px;
  border-radius: 0 12px 0 0;
  transform: skewX(18deg);
}

.file-tab.active {
  width: 152px;
  padding: 0 7px 0 19px;
  color: #f2f2f2;
}

.file-tab.active::before, .file-tab.active::after {
  background: #3b4454;
}

.add-tab {
  display: flex;
  justify-content: center;
  align-items: center;
  width: 26px;
  height: 18px;
  margin: 0 0 4px 17px;
  background: #2f3642;
  border-radius: 3px 10px 3px 10px;
}

/* model space */
.viewport {
  position: relative;
  flex: 1;
  min-height: 0;
  margin: 0 3px;
  border: solid #3b4454;
  border-width: 6px 4px 1px 1px;
  border-bottom-color: #4d5158;
  overflow: hidden;
}

.grid, .drawing {
  position: absolute;
  left: 0;
  top: 0;
  width: 100%;
  height: 100%;
}

.view-label {
  position: absolute;
  left: 3px;
  top: 5px;
  display: flex;
  font-size: 16px;
  line-height: 20px;
  color: #fff;
}

.view-buttons {
  position: absolute;
  right: 12px;
  top: 10px;
  display: flex;
  gap: 11px;
}

.view-cube {
  position: absolute;
  right: 25px;
  top: 53px;
  width: 130px;
  height: 130px;
  border: 15px solid rgba(120, 122, 128, 0.4);
  border-radius: 50%;
  color: #c4c5c6;
  font-size: 20px;
  line-height: 20px;
}

.view-cube > span, .cube-face {
  position: absolute;
}

.north { left: 40px; top: -19px; }
.south { left: 40px; top: 103px; }
.west { left: -21px; top: 42px; }
.east { right: -21px; top: 42px; }

.cube-face {
  left: 22px;
  top: 22px;
  width: 56px;
  height: 56px;
  padding: 10px;
  background: #b0b2b4;
  border: 1px solid #777b7e;
}

.cube-face span {
  display: block;
  background: #a3aab0;
  color: #4a505c;
  font-size: 34px;
  font-weight: 300;
  line-height: 34px;
}

.wcs {
  position: absolute;
  right: 62px;
  top: 212px;
  display: flex;
  align-items: center;
  justify-content: space-between;
  width: 57px;
  height: 21px;
  padding: 0 4px 0 4px;
  background: #9a9bab;
  border: 1px solid #b1b2bd;
  border-radius: 5px;
  color: #4b4e57;
  font: 13px "Liberation Sans", sans-serif;
}

.nav-bar {
  position: absolute;
  right: 3px;
  top: 263px;
  background: rgba(108, 112, 116, 0.8);
  border-radius: 4px;
}

.ucs-icon {
  position: absolute;
  left: 10px;
  bottom: 10px;
}

.ucs-icon text {
  font: 300 22px "Open Sans", sans-serif;
  fill: #f0f0f0;
}

.command {
  position: absolute;
  left: 382px;
  right: 381px;
  bottom: 1px;
}

.history {
  display: flex;
  flex-direction: column;
  align-items: flex-start;
  gap: 6px;
  padding: 0 0 5px 76px;
  font-size: 16px;
  line-height: 18px;
  font-family: "Noto Sans CJK SC", sans-serif;
}

.history p {
  height: 19px;
  margin: 0;
  padding: 0 3px;
  background: #4c4f53;
  border-radius: 3px;
  color: #d0d1d2;
  white-space: pre;
}

.history .oldest { background: #414549; color: #94969a; }
.history .older { background: #45494d; color: #b0b2b4; }

.history code {
  font: 15px "Liberation Mono", monospace;
}

.command-line {
  display: flex;
  height: 33px;
}

.command-tools {
  display: flex;
  align-items: center;
  gap: 7px;
  width: 69px;
  padding: 0 6px 0 4px;
  background: #2b303e;
}

.command-tools .wrench {
  margin-left: auto;
}

.command-input {
  flex: 1;
  display: flex;
  align-items: center;
  gap: 3px;
  height: 32px;
  padding: 0 7px 0 5px;
  background: rgba(198, 199, 200, 0.94);
  border-radius: 3px 0 0 3px;
}

.command-input input {
  flex: 1;
  margin-left: 5px;
  color: #333;
  font: italic 16px "Noto Sans CJK SC", sans-serif;
  outline: none;
}

.command-input input::placeholder {
  color: #6c6e72;
}

/* status bar */
.status-bar {
  display: flex;
  justify-content: space-between;
  height: 38px;
  padding: 1px 5px 0 14px;
}

.layout-tabs {
  display: flex;
  align-items: flex-start;
  color: #b6bac1;
}

.layout-tabs button {
  width: 67px;
  height: 21px;
  padding-bottom: 3px;
  line-height: 18px;
  background: #2f3642;
  border-radius: 0 0 10px 10px;
  margin-right: 1px;
}

.layout-tabs .active {
  width: 64px;
  background: #3b4454;
  color: #fff;
  font-weight: bold;
}

.layout-tabs .add {
  display: flex;
  justify-content: center;
  align-items: center;
  width: 28px;
  height: 18px;
  padding: 0;
  margin: 1px 0 0 5px;
  border-radius: 10px 2px 10px 2px;
}

.status-tools {
  display: flex;
  align-items: flex-start;
  gap: 3px;
}

.group {
  display: flex;
  height: 30px;
  background: #3b4454;
}

.group button {
  display: flex;
  justify-content: center;
  align-items: center;
  width: 30px;
  color: #e0e0e0;
}

.group .on {
  width: 29px;
  background: #628fc3;
  color: #fff;
}

.osnap {
  gap: 1px;
}

.group .arrow { width: 20px; }
.group .model { width: 34px; font-weight: 500; color: #fff; }

.group .scale {
  width: 43px;
  gap: 5px;
  font-size: 14px;
}

.group .split {
  width: 31px;
  border-left: 1px solid #222933;
}

.group.sliver { width: 4px; }
```

FILE: script.js
```javascript
// model space grid: a major line every 5 minor ones
const MAJOR = 75.65;
const MINOR = MAJOR / 5;
const ORIGIN = { x: 64, y: 63 };

function drawGrid() {
  const canvas = document.getElementById("grid");
  const w = canvas.width = canvas.clientWidth;
  const h = canvas.height = canvas.clientHeight;
  const ctx = canvas.getContext("2d");

  ["#262d39", "#2e3547"].forEach((color, major) => {
    ctx.fillStyle = color;
    for (let k = -5; k * MINOR < w; k++) {
      if ((k % 5 === 0) !== !!major) continue;
      ctx.fillRect(Math.round(ORIGIN.x + k * MINOR), 0, 1, h);
      ctx.fillRect(0, Math.round(ORIGIN.y + k * MINOR), w, 1);
    }
  });
}

window.addEventListener("resize", drawGrid);
window.onload = drawGrid;
```
